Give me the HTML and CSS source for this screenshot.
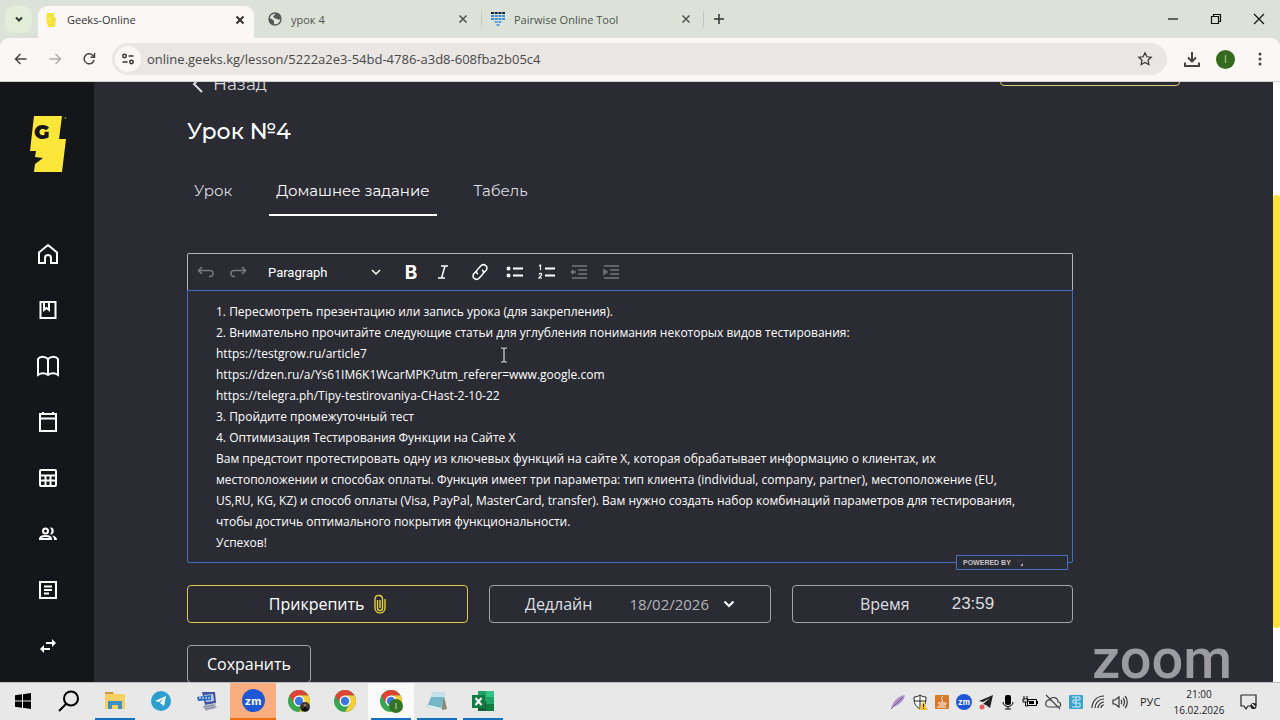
FILE: index.html
```html
<!DOCTYPE html>
<html lang="ru">
<head>
<meta charset="utf-8">
<meta name="viewport" content="width=device-width, initial-scale=1">
<title>Geeks-Online</title>
<link rel="stylesheet" href="styles.css">
</head>
<body>
<header class="browser">
  <div class="tabstrip">
    <button class="tab-search" aria-label="Поиск вкладок"><svg width="10" height="10" viewBox="0 0 10 10" class="line bold"><path d="M2 3.5l3 3 3-3"/></svg></button>
    <div class="tab active">
      <svg width="16" height="16" viewBox="0 0 16 16"><path d="M4 1h7v4l2 1-1 9H5l-1-4-1-4z" fill="#f3e53b"/><path d="M4 7h4" stroke="#fff48d"/></svg>
      <span class="tab-title">Geeks-Online</span>
      <button class="close" aria-label="Закрыть"><svg width="10" height="10" viewBox="0 0 10 10" class="line bold"><path d="M1.5 1.5l7 7m0-7l-7 7"/></svg></button>
    </div>
    <div class="tab">
      <svg width="16" height="16" viewBox="0 0 16 16"><circle cx="8" cy="8" r="6" fill="#e1e6dc" stroke="#555a58" stroke-width="1.4"/><path d="M2 7l3 1 2 2v3l-1 1C3 13 2 10 2 7zM8 2h3c2 1 3 3 3 5l-2 2-2-1-3-1-1-2 2-1z" fill="#555a58"/></svg>
      <span class="tab-title">урок 4</span>
      <button class="close" aria-label="Закрыть"><svg width="10" height="10" viewBox="0 0 10 10" class="line"><path d="M1.5 1.5l7 7m0-7l-7 7"/></svg></button>
    </div>
    <div class="tab divided">
      <svg width="16" height="16" viewBox="0 0 16 16"><path d="M1 2h14" stroke="#14283f" stroke-width="2" stroke-dasharray="3 .7"/><path d="M1 5h14M1 8h14" stroke="#3f8ed0" stroke-width="2" stroke-dasharray="3 .7"/><path d="M4.700 11h7M6.500 14h3" stroke="#57a4df" stroke-width="2" stroke-dasharray="3 .7"/></svg>
      <span class="tab-title">Pairwise Online Tool</span>
      <button class="close" aria-label="Закрыть"><svg width="10" height="10" viewBox="0 0 10 10" class="line"><path d="M1.5 1.5l7 7m0-7l-7 7"/></svg></button>
    </div>
    <button class="new-tab" aria-label="Новая вкладка"><svg width="12" height="12" viewBox="0 0 12 12" class="line"><path d="M6 1v10M1 6h10"/></svg></button>
    <div class="window-buttons">
      <button aria-label="Свернуть"><svg width="12" height="12" viewBox="0 0 12 12" class="line thin"><path d="M1 6h10"/></svg></button>
      <button aria-label="Развернуть"><svg width="12" height="12" viewBox="0 0 12 12" class="line thin"><path d="M1.500 3.500h7v7h-7zM3.500 3V1.500h7v7H9"/></svg></button>
      <button aria-label="Закрыть окно"><svg width="12" height="12" viewBox="0 0 12 12" class="line thin"><path d="M1 1l10 10M11 1L1 11"/></svg></button>
    </div>
  </div>
  <div class="navbar">
    <button class="nav" aria-label="Назад"><svg width="16" height="16" viewBox="0 0 16 16" class="line"><path d="M13.500 8h-11M7.500 3l-5 5 5 5"/></svg></button>
    <button class="nav muted" aria-label="Вперёд"><svg width="16" height="16" viewBox="0 0 16 16" class="line"><path d="M2.500 8h11M8.500 3l5 5-5 5"/></svg></button>
    <button class="nav" aria-label="Обновить"><svg width="16" height="16" viewBox="0 0 16 16" class="line"><path d="M13 9a5 5 0 1 1-1.300-4.700L13.500 6M13.500 2v4.200H9.500"/></svg></button>
    <div class="address">
      <button class="site-info" aria-label="Сведения о сайте"><svg width="14" height="14" viewBox="0 0 14 14" class="line"><circle cx="3.500" cy="4" r="1.700"/><path d="M7.500 4h5M1.500 10h5"/><circle cx="10.500" cy="10" r="1.700"/></svg></button>
      <input class="url" type="text" aria-label="Адрес" value="online.geeks.kg/lesson/5222a2e3-54bd-4786-a3d8-608fba2b05c4">
      <button class="star" aria-label="В закладки"><svg width="16" height="16" viewBox="0 0 16 16" class="line thin"><path d="M8 1.800l1.900 4 4.300.5-3.200 3 .9 4.400L8 11.500l-3.900 2.200.9-4.400-3.200-3 4.300-.5z"/></svg></button>
    </div>
    <button class="nav" aria-label="Загрузки"><svg width="18" height="18" viewBox="0 0 18 18" class="line bold"><path d="M9 2v9M5 7.500l4 4 4-4M2 12.500V16h14v-3.500"/></svg></button>
    <button class="profile" aria-label="Профиль">I</button>
    <button class="nav" aria-label="Меню"><svg width="16" height="16" viewBox="0 0 16 16" fill="#444"><circle cx="8" cy="3" r="1.500"/><circle cx="8" cy="8" r="1.500"/><circle cx="8" cy="13" r="1.500"/></svg></button>
  </div>
</header>

<div class="viewport">
  <aside class="sidebar">
    <svg class="logo" width="38" height="58" viewBox="0 0 38 58" role="img" aria-label="Geeks"><path d="M5 1h28l-3 23h7l-4 33H5l1-8 8-6-8-1 1-6H1z" fill="#fde63a"/><text x="5" y="24" class="logo-letter">G</text><circle cx="36.500" cy="3" r="1" fill="#777b4c"/></svg>
    <nav class="side-nav">
      <a href="#" aria-label="Главная"><svg width="24" height="24" viewBox="0 0 24 24" class="line bold"><path d="M3 10.500L12 3l9 7.500V21h-6v-5a3 3 0 0 0-6 0v5H3z"/></svg></a>
      <a href="#" aria-label="Курсы"><svg width="24" height="24" viewBox="0 0 24 24" class="line bold"><path d="M4.500 4h15v16h-15zM8 4v8l2.500-2 2.500 2V4"/></svg></a>
      <a href="#" aria-label="Уроки"><svg width="24" height="24" viewBox="0 0 24 24" class="line bold"><path d="M12 5C9 2 4 2 2 5v16c3-2 7-2 10 0 3-2 7-2 10 0V5c-2-3-7-3-10 0v16"/></svg></a>
      <a href="#" aria-label="Календарь"><svg width="24" height="24" viewBox="0 0 24 24" class="line bold"><path d="M4 4h16v17H4zM4 8.500h16M7 2v2M17 2v2"/></svg></a>
      <a href="#" aria-label="Расписание"><svg width="24" height="24" viewBox="0 0 24 24" class="line bold"><rect x="4" y="4" width="16" height="16" rx="1"/><path d="M4 9.500h16M4 14.500h16M9.500 9.500V20M14.500 9.500V20"/></svg></a>
      <a href="#" aria-label="Группы"><svg width="24" height="24" viewBox="0 0 24 24" class="line bold"><circle cx="9.500" cy="9" r="2.500"/><path d="M4 17c0-4 11-4 11 0z"/><path d="M14 5.500c5-1 5 8 0 7 2-2 2-5 0-7zM16 13.500c3 .5 5 2 5 4.500h-3c0-2-.5-3-2-4.500z" fill="#fff" stroke="none"/></svg></a>
      <a href="#" aria-label="Материалы"><svg width="24" height="24" viewBox="0 0 24 24" class="line bold"><path d="M4 4h16v16H4zM8 8.500h8M8 12h8M8 15.500h5"/></svg></a>
      <a href="#" aria-label="Обмен"><svg width="24" height="24" viewBox="0 0 24 24" class="line bold"><path d="M10 9h8M14 15H6"/><path d="M16 5l4 4-4 4zM8 11l-4 4 4 4z" fill="#fff" stroke="none"/></svg></a>
    </nav>
  </aside>

  <main class="page">
    <div class="page-top">
      <a href="#" class="back"><svg width="12" height="20" viewBox="0 0 12 20" class="line bold"><path d="M10 2L2 10l8 8"/></svg>Назад</a>
      <button class="top-action" aria-label="Действие"></button>
    </div>
    <h1>Урок №4</h1>
    <nav class="tabs">
      <a href="#">Урок</a>
      <a href="#" class="current">Домашнее задание</a>
      <a href="#">Табель</a>
    </nav>

    <form class="homework">
      <section class="editor">
        <div class="editor-bar">
          <button type="button" class="dim" aria-label="Отменить"><svg width="20" height="20" viewBox="0 0 20 20" class="line"><path d="M6 5L2.500 8.500 6 12M3 8.500h11c4 0 4 6 0 6h-1"/></svg></button>
          <button type="button" class="dim" aria-label="Повторить"><svg width="20" height="20" viewBox="0 0 20 20" class="line"><path d="M14 5l3.500 3.500L14 12M17 8.500H6c-4 0-4 6 0 6h1"/></svg></button>
          <div class="select-wrap">
            <select aria-label="Стиль"><option>Paragraph</option></select>
            <svg width="10" height="10" viewBox="0 0 10 10" class="line"><path d="M1 3l4 4 4-4"/></svg>
          </div>
          <button type="button" class="letter strong" aria-label="Жирный">B</button>
          <button type="button" aria-label="Курсив"><svg width="20" height="20" viewBox="0 0 20 20" class="line"><path d="M8 4h7M5 16h7M12 4L8.500 16"/></svg></button>
          <button type="button" class="link-tool" aria-label="Ссылка"><svg width="20" height="20" viewBox="0 0 20 20" class="line"><path d="M8 12c-2-1-2-3-.5-4.500l3.500-3.700c3-3 8 1 5.200 4.400L13 11.500M12 8c2 1 2 3 .5 4.500L9 16.200c-3 3-8-1-5.200-4.400L7 8.500"/></svg></button>
          <button type="button" aria-label="Маркированный список"><svg width="20" height="20" viewBox="0 0 20 20" class="line bold"><path d="M8 6.500h10M8 13.500h10"/><circle cx="3.500" cy="6.500" r="1"/><circle cx="3.500" cy="13.500" r="1"/></svg></button>
          <button type="button" aria-label="Нумерованный список"><svg width="20" height="20" viewBox="0 0 20 20" class="line bold"><path d="M8 6.500h10M8 13.500h10"/><path class="thin" d="M2 4l1.500-1v5M2 12.500c1-2 3-1 2.500.5L2 16h3"/></svg></button>
          <button type="button" class="dim" aria-label="Уменьшить отступ"><svg width="20" height="20" viewBox="0 0 20 20" class="line"><path d="M3 4h15M9 8h9M9 12h9M3 16h15M2.500 10H7M4.500 8l-2 2 2 2"/></svg></button>
          <button type="button" class="dim" aria-label="Увеличить отступ"><svg width="20" height="20" viewBox="0 0 20 20" class="line"><path d="M3 4h15M9 8h9M9 12h9M3 16h15M3 8v4l3-2z"/></svg></button>
        </div>
        <div class="editor-body" contenteditable="true" spellcheck="false">
          <p>1. Пересмотреть презентацию или запись урока (для закрепления).</p>
          <p>2. Внимательно прочитайте следующие статьи для углубления понимания некоторых видов тестирования:</p>
          <p>https://testgrow.ru/article7</p>
          <p>https://dzen.ru/a/Ys61IM6K1WcarMPK?utm_referer=www.google.com</p>
          <p>https://telegra.ph/Tipy-testirovaniya-CHast-2-10-22</p>
          <p>3. Пройдите промежуточный тест</p>
          <p>4. Оптимизация Тестирования Функции на Сайте X</p>
          <p>Вам предстоит протестировать одну из ключевых функций на сайте X, которая обрабатывает информацию о клиентах, их<br>местоположении и способах оплаты. Функция имеет три параметра: тип клиента (individual, company, partner), местоположение (EU,<br>US,RU, KG, KZ) и способ оплаты (Visa, PayPal, MasterCard, transfer). Вам нужно создать набор комбинаций параметров для тестирования,<br>чтобы достичь оптимального покрытия функциональности.</p>
          <p>Успехов!</p>
        </div>
        <div class="powered">POWERED BY <svg width="10" height="10" viewBox="0 0 10 10"><path d="M2 5l2-3h4" fill="none" stroke="#454048"/><path d="M5 8l3-3v3z" fill="#aaa"/></svg></div>
        <svg class="ibeam line thin" width="8" height="16" viewBox="0 0 8 16"><path d="M1 1h2l1 1 1-1h2M4 2v12M1 15h2l1-1 1 1h2"/></svg>
      </section>

      <div class="fields">
        <button type="button" class="box attach">Прикрепить <svg width="14" height="20" viewBox="0 0 14 20"><path d="M4.500 6v8a2.500 2.500 0 0 0 5 0V5a3.500 3.500 0 0 0-2.800-3.500C4 1 2 2.500 2 5v9c0 6.500 10 6.500 10 0V5M7 6v8" fill="none" stroke="#e0cf3e" stroke-width="1.400"/></svg></button>
        <div class="box"><label for="deadline">Дедлайн</label>
          <button type="button" class="date" id="deadline">18/02/2026<svg width="12" height="12" viewBox="0 0 12 12" class="line bold"><path d="M1.500 3.500L6 8l4.500-4.500"/></svg></button></div>
        <div class="box time"><label for="time">Время</label><input id="time" type="text" value="23:59"></div>
      </div>
      <button type="button" class="box save">Сохранить</button>
    </form>
    <div class="watermark">zoom</div>
  </main>
  <div class="scroll-track"><div class="scroll-thumb"></div></div>
</div>

<footer class="taskbar">
  <div class="apps">
    <button class="app" aria-label="Пуск"><svg width="16" height="16" viewBox="0 0 16 16"><path d="M0 2.300l7-1v6.200H0zM8 1.200L16 0v7.500H8zM0 8.500h7v6.200l-7-1zM8 8.500h8V16l-8-1.200z"/></svg></button>
    <button class="app" aria-label="Поиск"><svg width="22" height="22" viewBox="0 0 22 22" fill="none" stroke="#000" stroke-width="2"><circle cx="13" cy="8.500" r="7"/><path d="M8 14l-7 7"/></svg></button>
    <button class="app running" aria-label="Проводник"><svg width="22" height="20" viewBox="0 0 22 20"><path d="M1 1h8l2 2h10v15H1z" fill="#f8cf61"/><path d="M1 1h8v2H1z" fill="#c59a3c"/><path d="M4 10h14v8h-4v-4H8v4H4z" fill="#3d91c7"/></svg></button>
    <button class="app" aria-label="Telegram"><svg width="20" height="20" viewBox="0 0 20 20"><circle cx="10" cy="10" r="10" fill="#2b9fd0"/><path d="M4 10l11-5-2 10-4-3 4-5-5 4z" fill="#fff"/></svg></button>
    <button class="app" aria-label="Удалённый рабочий стол"><svg width="24" height="24" viewBox="0 0 24 24"><path d="M7 3h13l1 11-11 2z" fill="#4254a4"/><path d="M9 6l9-1 1 7-8 1z" fill="#bfcef1"/><path d="M2 8l14-2v5L3 12z" fill="#2969c0"/><path d="M4 9h11" stroke="#fff" stroke-dasharray="2 1"/><path d="M7 17l13-3 2 5-11 3z" fill="#b9bac7"/><path d="M9 18l10-2M10 20l10-2" stroke="#7d8093"/></svg></button>
    <button class="app alert" aria-label="Zoom"><span class="zm">zm</span></button>
    <button class="app" aria-label="Chrome"><svg width="24" height="24" viewBox="0 0 24 24"><circle cx="12" cy="12" r="11" fill="#38a650"/><path d="M2.500 6.500a11 11 0 0 1 19 0H12L7.200 14.800z" fill="#dd4436"/><path d="M12 6.500h9.500A11 11 0 0 1 12 23l4.800-8.200z" fill="#f8cb39"/><circle cx="12" cy="12" r="5.500" fill="#fff"/><circle cx="12" cy="12" r="4.200" fill="#3b78dd"/><circle cx="18" cy="18" r="5" fill="#39332f"/><path d="M15 22c0-5 6-5 6 0z" fill="#111"/><circle cx="18" cy="16" r="1.500" fill="#8b7568"/></svg></button>
    <button class="app" aria-label="Chrome"><svg width="24" height="24" viewBox="0 0 24 24"><circle cx="12" cy="12" r="11" fill="#38a650"/><path d="M2.500 6.500a11 11 0 0 1 19 0H12L7.200 14.800z" fill="#dd4436"/><path d="M12 6.500h9.500A11 11 0 0 1 12 23l4.800-8.200z" fill="#f8cb39"/><circle cx="12" cy="12" r="5.500" fill="#fff"/><circle cx="12" cy="12" r="4.200" fill="#3b78dd"/></svg></button>
    <button class="app focused running" aria-label="Chrome"><svg width="24" height="24" viewBox="0 0 24 24"><circle cx="12" cy="12" r="11" fill="#38a650"/><path d="M2.500 6.500a11 11 0 0 1 19 0H12L7.200 14.800z" fill="#dd4436"/><path d="M12 6.500h9.500A11 11 0 0 1 12 23l4.800-8.200z" fill="#f8cb39"/><circle cx="12" cy="12" r="5.500" fill="#fff"/><circle cx="12" cy="12" r="4.200" fill="#3b78dd"/><circle cx="17" cy="17" r="7" fill="#357227"/><path d="M17 14v6" stroke="#bfe0b0"/></svg></button>
    <button class="app running" aria-label="Блокнот"><svg width="24" height="24" viewBox="0 0 24 24"><path d="M18 3l4 17-5 1z" fill="#8b8470"/><path d="M8 3l12 1-4 17-14-3z" fill="#75b6c8"/><path d="M8 3l12 1-1 4L6 8z" fill="#c3e2e9"/><path d="M3 17l13 3" stroke="#e5f4f6" stroke-width="2"/></svg></button>
    <button class="app running" aria-label="Excel"><svg width="24" height="24" viewBox="0 0 24 24"><path d="M7 2h16v20H7z" fill="#21a365"/><path d="M15 2h8v6h-8z" fill="#33c481"/><path d="M7 12h8v10H7z" fill="#185c37"/><path d="M15 15h8v7h-8z" fill="#107c41"/><rect x="1" y="6" width="13" height="13" fill="#107c41"/><path d="M4.500 9l6 7M10.500 9l-6 7" stroke="#fff" stroke-width="2"/></svg></button>
  </div>
  <div class="tray">
    <svg width="16" height="16" viewBox="0 0 16 16"><path d="M1 15C3 7 8 2 15 1c-1 6-6 10-12 12z" fill="#aa91c8"/><path d="M1 15L13 3" stroke="#765b98"/></svg>
    <svg width="16" height="16" viewBox="0 0 16 16"><path d="M8 1c2 1.500 4 2 6 2 0 6-1 9-6 12C3 12 2 9 2 3c2 0 4-.5 6-2z" fill="#fff" stroke="#222"/><path d="M8 1v14M2 7h12" stroke="#222"/><path d="M11 7l5 9H7z" fill="#f4c42c"/><path d="M11.500 10v3M11.500 14v1" stroke="#222"/></svg>
    <svg width="16" height="16" viewBox="0 0 16 16"><rect x="1" y="1" width="14" height="14" rx="1" fill="#d9792c"/><path d="M9 2c-4 3 1 3-1 6M4 9h7c2 0 1 2-1 2M5 11h5M3 13h9" fill="none" stroke="#fff"/></svg>
    <span class="zm small">zm</span>
    <svg width="16" height="16" viewBox="0 0 16 16"><path d="M1 7l14-6-3 13-4-3-3-1 7-6-7 4z" fill="#222"/><circle cx="4" cy="13" r="2.500" fill="#ed5960"/></svg>
    <svg width="16" height="16" viewBox="0 0 16 16"><rect x="5" y="1" width="6" height="10" rx="2"/><path d="M3 8c0 6 10 6 10 0M8 12v3M5 15h6" fill="none" stroke="#000"/></svg>
    <svg width="16" height="16" viewBox="0 0 16 16"><path d="M5.500 5.500h9v6h-9z" fill="none" stroke="#000"/><path d="M7 7h5v3H7z"/><path d="M2 2v3M5 2v3M1 5h5v3H1zM3.500 8v4H6" fill="none" stroke="#000"/><path d="M15 7h1v3h-1z"/></svg>
    <svg width="18" height="16" viewBox="0 0 18 16" fill="none" stroke="#444" stroke-width="1.200"><path d="M5 13h9c4 0 3-5 0-5 0-5-7-6-8-2-5-1-6 7-1 7zM2 1l14 14"/></svg>
    <svg width="16" height="16" viewBox="0 0 16 16"><rect x="1" y="1" width="14" height="14" rx="1" fill="#3ca3cc"/><path d="M4 3h8v3H5v3h7v4H4M8 3v10" fill="none" stroke="#cdeff8"/></svg>
    <svg width="16" height="16" viewBox="0 0 16 16" fill="none" stroke="#333" stroke-width="1.200"><path d="M2 14C2 7 7 2 14 2M5 14c0-5 4-9 9-9M8 14c0-3 3-6 6-6M11 14c0-2 1-3 3-3"/></svg>
    <svg width="16" height="16" viewBox="0 0 16 16" fill="none" stroke="#333" stroke-width="1.200"><path d="M1 6h2l4-3v10l-4-3H1zM9 6c1 1 1 3 0 4M11 4c2 2 2 6 0 8M13 2c3 3 3 9 0 12"/></svg>
    <span class="lang">РУС</span>
    <time class="clock">21:00<br>16.02.2026</time>
    <button class="notices" aria-label="Уведомления"><svg width="18" height="18" viewBox="0 0 18 18" fill="none" stroke="#222" stroke-width="1.200"><path d="M1 2h15v10M11 13H8l-2 3-2-3H1V2"/><circle cx="13.500" cy="13" r="2.500" fill="#222"/><path d="M12 11l3 3" stroke="#fff"/></svg></button>
  </div>
</footer>
</body>
</html>
```

FILE: styles.css
```css
* { box-sizing: border-box; }
body {
  margin: 0;
  height: 100vh;
  display: flex;
  flex-direction: column;
  overflow: hidden;
  background: #2b2b33;
  font-family: "Open Sans", "Noto Sans", sans-serif;
}
button, input, select { font: inherit; color: inherit; }
button {
  display: flex;
  align-items: center;
  justify-content: center;
  padding: 0;
  border: 0;
  background: none;
}
a { color: inherit; text-decoration: none; }
svg { flex: none; }
.line { fill: none; stroke: currentColor; stroke-width: 1.5; }
.bold { stroke-width: 2; }
.thin { stroke-width: 1.2; }

/* Browser frame */
.browser { background: #dce2d8; color: #333; }
.tabstrip { display: flex; align-items: center; height: 38px; padding-left: 5px; font-size: 11px; }
.tab-search { width: 27px; height: 27px; margin-right: 6px; border-radius: 9px; background: #e2edda; }
.tab {
  display: flex;
  align-items: center;
  gap: 8px;
  flex: 0 1 227px;
  height: 32px;
  padding: 0 13px;
  color: #4f544e;
}
.tab.active {
  flex-basis: 216px;
  align-self: flex-end;
  padding: 0 9px 5px 5px;
  border-radius: 9px 9px 0 0;
  background: #fbf7f4;
  color: #333;
}
.tab.divided { flex-basis: 223px; border: solid #c3c8bc; border-width: 0 1px; height: 16px; padding: 0 12px 0 8px; }
.tab-title { flex: 1; white-space: nowrap; overflow: hidden; }
.new-tab { width: 30px; height: 28px; }
.window-buttons { display: flex; margin-left: auto; }
.window-buttons button { width: 43px; height: 38px; color: #111; }
.navbar {
  display: flex;
  align-items: center;
  gap: 2px;
  height: 44px;
  padding: 0 4px 1px 5px;
  border-radius: 9px 9px 0 0;
  background: #fbf7f4;
  border-bottom: 1px solid #d2cfd0;
}
.nav { width: 32px; height: 32px; color: #444; }
.nav.muted { color: #b0acaa; }
.address {
  display: flex;
  align-items: center;
  flex: 1;
  height: 32px;
  margin: 0 7px 0 5px;
  padding: 0 14px 0 3px;
  border-radius: 16px;
  background: #e9e6e3;
}
.site-info { width: 26px; height: 26px; margin-right: 6px; border-radius: 50%; background: #fbf7f4; }
.url { flex: 1; min-width: 0; padding: 0; border: 0; background: none; font-size: 13px; color: #484848; }
.profile { width: 19px; height: 19px; margin: 0 7px 0 6px; border-radius: 50%; background: #34691f; color: #b9e5a0; font-size: 10px; }

/* Application */
.viewport { position: relative; display: flex; flex: 1; min-height: 0; color: #fff; }
.sidebar { display: flex; flex-direction: column; align-items: center; width: 94px; padding: 33px 0 0 2px; background: #15161a; overflow: hidden; flex: none; }
.logo-letter { font: 900 20px Montserrat, Inter, sans-serif; fill: #15161a; }
.side-nav { display: flex; flex-direction: column; gap: 32px; margin-top: 69px; }
.side-nav a { display: flex; height: 24px; }
.page { flex: 1; min-width: 0; padding: 0 93px; overflow: hidden; font-family: "Montserrat", "Open Sans", sans-serif; }
.page-top { display: flex; justify-content: space-between; height: 40px; margin-top: -34px; }
.back { display: flex; align-items: center; align-self: flex-end; gap: 9px; padding-left: 5px; height: 24px; margin-bottom: -8px; font-size: 17px; color: #dcdce0; }
.top-action { width: 180px; height: 38px; border: 1px solid #dccb76; border-radius: 4px; }
h1 { margin: 29px 0 0; font-size: 22px; line-height: 30px; font-weight: 500; }
.tabs { display: flex; gap: 30px; margin-top: 21px; font-size: 15px; color: #dedee2; }
.tabs a { height: 48px; padding: 11px 7px 0; line-height: 24px; }
.tabs .current { color: #fff; border-bottom: 2px solid #fff; }
.homework { max-width: 886px; margin-top: 37px; }
.editor { position: relative; }
.editor-bar { display: flex; align-items: center; gap: 8px; height: 37px; padding: 0 6px; border: 1px solid #b5b5bb; border-bottom: 0; border-radius: 2px 2px 0 0; }
.editor-bar button { width: 24px; height: 28px; }
.editor-bar .dim { color: #777780; }
.editor-bar .letter { font: 700 19px Inter, sans-serif; }
.editor-bar .link-tool { margin: 0 3px 0 5px; }
.select-wrap { display: flex; align-items: center; width: 113px; margin: 0 10px 0 10px; font-family: Roboto, sans-serif; font-size: 13px; }
.select-wrap select { flex: 1; appearance: none; padding: 0; border: 0; background: none; }
.editor-body { padding: 10px 28px 9px; border: 1px solid #4070bb; border-radius: 0 0 2px 2px; font-family: "Open Sans", "Noto Sans", sans-serif; font-size: 12px; line-height: 21px; }
.editor-body p { margin: 0; }
.powered { position: absolute; right: 5px; bottom: -7px; display: flex; align-items: center; gap: 4px; width: 112px; height: 15px; padding-left: 6px; border: 1px solid #4670bb; background: #2b2b33; font: 700 7px "Liberation Sans", sans-serif; color: #c8c4ca; }
.ibeam { position: absolute; left: 313px; top: 94px; color: #d5d5d8; }
.fields { display: grid; grid-template-columns: repeat(3, 1fr); gap: 21px; margin-top: 22px; }
.box { display: flex; align-items: center; height: 38px; border: 1px solid #a2a2a9; border-radius: 4px; font-family: "Open Sans", "Noto Sans", sans-serif; font-size: 16px; color: #dedee1; }
.fields .box { justify-content: center; gap: 37px; }
.fields .attach { gap: 8px; border-color: #ddcb47; color: #fff; }
.date { gap: 14px; font-size: 15px; color: #b4b4ba; }
.date svg { color: #fff; }
.fields .time { gap: 42px; }
.time input { width: 53px; padding: 0; border: 0; background: none; font-family: "Liberation Sans", sans-serif; font-size: 17px; }
.save { width: 124px; margin-top: 22px; justify-content: center; color: #fff; }
.watermark { position: absolute; right: 48px; bottom: 3px; font: 500 56px/40px Roboto, sans-serif; color: #9b9ba1; }
.scroll-track { width: 7px; padding-top: 113px; background: #fff; flex: none; }
.scroll-thumb { height: 89%; border-radius: 3px; background: #fbe33c; }

/* Taskbar */
.taskbar { display: flex; justify-content: space-between; height: 38px; background: #e8e8e8; border-top: 1px solid #bcbcbc; color: #222; flex: none; }
.apps { display: flex; }
.app { width: 46px; border-bottom: 2px solid transparent; }
.app.running { border-image: linear-gradient(90deg, transparent 10%, #1670bd 10%, #1670bd 90%, transparent 90%) 2; }
.app.focused { background: #f9f9f9; }
.app.alert { background: #faae7f; border-bottom-color: #ef700e; }
.zm { display: grid; place-items: center; width: 23px; height: 23px; border-radius: 50%; background: #1f58d7; color: #fff; font: 700 11px/12px Inter, sans-serif; }
.zm.small { width: 16px; height: 16px; font-size: 8px; }
.tray { display: flex; align-items: center; gap: 6px; padding-right: 22px; font-size: 11px; }
.lang { margin-left: 6px; width: 22px; }
.clock { width: 62px; text-align: center; font-size: 10px; line-height: 16px; }
.notices { width: 18px; margin-left: 4px; }
```
